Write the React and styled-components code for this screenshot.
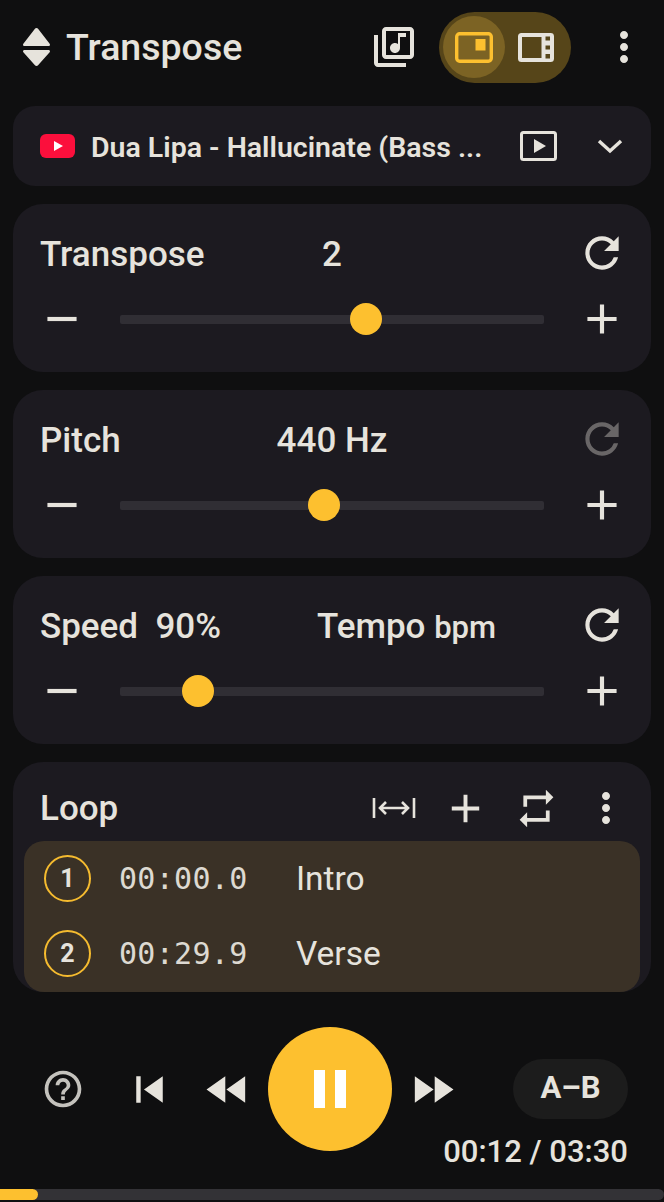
import React from 'react';
import styled, { createGlobalStyle } from 'styled-components';

const GlobalStyle = createGlobalStyle`
  html, body {
    margin: 0;
    padding: 0;
    background: #0f0f10;
  }
  * {
    box-sizing: border-box;
  }
`;

const Page = styled.div`
  width: 664px;
  height: 1202px;
  overflow: hidden;
  display: flex;
  flex-direction: column;
  background: #0f0f10;
  color: #e6e3dc;
  font-family: Roboto, "Liberation Sans", sans-serif;
`;

const Header = styled.header`
  height: 94px;
  flex: none;
  display: flex;
  align-items: center;
  padding: 0 16px 0 22px;
  margin-bottom: 12px;
`;

const AppTitle = styled.h1`
  margin: 0 0 0 15px;
  font-size: 37.5px;
  font-weight: 500;
  flex: 1;
`;

const LayoutToggle = styled.div`
  width: 132px;
  height: 71px;
  margin: 0 29px 0 21px;
  border-radius: 36px;
  background: #564519;
  display: flex;
  align-items: center;
  padding-left: 4px;
`;

const ToggleItem = styled.div`
  width: 62px;
  height: 62px;
  border-radius: 50%;
  display: flex;
  align-items: center;
  justify-content: center;
  background: ${(p) => (p.$active ? '#7c6324' : 'transparent')};
`;

const Main = styled.main`
  display: flex;
  flex-direction: column;
  gap: 18px;
  padding: 0 13px;
`;

const VideoCard = styled.section`
  height: 80px;
  border-radius: 22px;
  background: #1c1a20;
  display: flex;
  align-items: center;
  padding: 0 24px 0 27px;
`;

const VideoTitle = styled.div`
  width: 393px;
  margin: 2px 36px 0 16px;
  font-size: 28.5px;
  font-weight: 600;
  white-space: nowrap;
`;

const ChevronSlot = styled.div`
  margin-left: 40px;
  display: flex;
`;

const Card = styled.section`
  height: ${(p) => p.$height || 168}px;
  border-radius: 30px;
  background: #1c1a20;
`;

const ControlRow = styled.div`
  height: 68px;
  margin-top: 16px;
  padding: 0 27px;
  display: grid;
  grid-template-columns: ${(p) => p.$columns || '1fr auto 1fr'};
  align-items: center;
  font-size: 35px;
  font-weight: 500;
`;

const ValueText = styled.span`
  text-align: center;
`;

const Unit = styled.span`
  font-size: 31px;
`;

const ResetButton = styled.div`
  justify-self: end;
  display: flex;
  margin: -2px -3px 0 0;
  opacity: ${(p) => (p.$disabled ? 0.38 : 1)};
`;

const SliderRow = styled.div`
  display: flex;
  align-items: center;
  height: 50px;
  margin-top: 6px;
  padding: 0 24px;
  gap: 33px;
`;

const SliderTrack = styled.div`
  position: relative;
  flex: 1;
  height: 9px;
  background: #302e34;
  border-radius: 2px;
`;

const SliderThumb = styled.div`
  position: absolute;
  top: 50%;
  width: 32px;
  height: 32px;
  margin: -16px 0 0 -16px;
  border-radius: 50%;
  background: #fdc02f;
`;

const LoopHead = styled.div`
  height: 68px;
  margin-top: 12px;
  padding: 0 21px 0 27px;
  display: flex;
  align-items: center;
  justify-content: space-between;
  font-size: 35px;
  font-weight: 500;
`;

const LoopTools = styled.div`
  display: flex;
  align-items: center;
  gap: 21px;
`;

const ToolSlot = styled.div`
  width: ${(p) => p.$width || 50}px;
  margin-right: ${(p) => p.$after || 0}px;
  display: flex;
  align-items: center;
  justify-content: center;
`;

const LoopList = styled.div`
  height: 151px;
  margin: -1px 11px 0;
  border-radius: 20px;
  background: #3a3126;
`;

const LoopRow = styled.div`
  height: 75px;
  padding-left: 20px;
  display: flex;
  align-items: center;
`;

const Badge = styled.div`
  width: 47px;
  height: 47px;
  flex: none;
  border-radius: 50%;
  border: 2px solid #f5bb2f;
  display: flex;
  align-items: center;
  justify-content: center;
  font-size: 25px;
  font-weight: 700;
`;

const LoopTime = styled.span`
  width: 177px;
  margin-left: 28px;
  font-family: "DejaVu Sans Mono", "Liberation Mono", monospace;
  font-size: 30px;
  letter-spacing: 0.3px;
  opacity: 0.95;
`;

const LoopName = styled.span`
  font-size: 33.5px;
`;

const Player = styled.footer`
  margin-top: 35px;
  height: 162px;
  flex: none;
  display: flex;
  align-items: flex-start;
  padding-left: 38px;
`;

const Transport = styled.div`
  height: 124px;
  width: 50px;
  flex: none;
  display: flex;
  align-items: center;
  justify-content: center;
  margin-left: ${(p) => p.$gap || 0}px;
`;

const PauseButton = styled.div`
  width: 124px;
  height: 124px;
  margin-left: 16px;
  flex: none;
  border-radius: 50%;
  background: #fdc02f;
  display: flex;
  align-items: center;
  justify-content: center;
`;

const PlayerRight = styled.div`
  margin-left: 56px;
  width: 115px;
  padding-top: 32px;
  display: flex;
  flex-direction: column;
  align-items: flex-end;
`;

const AbButton = styled.div`
  width: 115px;
  height: 60px;
  padding-bottom: 4px;
  border-radius: 30px;
  background: #1c1c1c;
  display: flex;
  align-items: center;
  justify-content: center;
  font-size: 31px;
  font-weight: 700;
`;

const TimeText = styled.div`
  margin-top: 14px;
  font-size: 31px;
  font-weight: 500;
  white-space: nowrap;
`;

const Progress = styled.div`
  height: 11px;
  flex: none;
  border-radius: 0 6px 6px 0;
  background: #333236;
  overflow: hidden;
`;

const ProgressFill = styled.div`
  height: 100%;
  border-radius: 0 6px 6px 0;
  background: #fdc02f;
`;

const Icon = ({ d, size = 50, color = '#e6e3dc' }) => (
  <svg width={size} height={size} viewBox="0 0 24 24" fill={color} style={{ flex: 'none', display: 'block' }}>
    <path d={d} />
  </svg>
);

const paths = {
  refresh:
    'M17.65 6.35A7.958 7.958 0 0 0 12 4c-4.42 0-7.99 3.58-7.99 8s3.57 8 7.99 8c3.73 0 6.84-2.55 7.73-6h-2.08A5.99 5.99 0 0 1 12 18c-3.31 0-6-2.69-6-6s2.69-6 6-6c1.66 0 3.14.69 4.22 1.78L13 11h7V4l-2.35 2.35z',
  more: 'M12 8c1.1 0 2-.9 2-2s-.9-2-2-2-2 .9-2 2 .9 2 2 2zm0 2c-1.1 0-2 .9-2 2s.9 2 2 2 2-.9 2-2-.9-2-2-2zm0 6c-1.1 0-2 .9-2 2s.9 2 2 2 2-.9 2-2-.9-2-2-2z',
  library:
    'M20 2H8c-1.1 0-2 .9-2 2v12c0 1.1.9 2 2 2h12c1.1 0 2-.9 2-2V4c0-1.1-.9-2-2-2zm0 14H8V4h12v12zm-7.5-1c1.38 0 2.5-1.12 2.5-2.5V7h3V5h-4v5.51c-.42-.32-.93-.51-1.5-.51-1.38 0-2.5 1.12-2.5 2.5s1.12 2.5 2.5 2.5zM4 6H2v14c0 1.1.9 2 2 2h14v-2H4V6z',
  plus: 'M19 13h-6v6h-2v-6H5v-2h6V5h2v6h6v2z',
  minus: 'M19 13H5v-2h14v2z',
  repeat: 'M7 7h10v3l4-4-4-4v3H5v6h2V7zm10 10H7v-3l-4 4 4 4v-3h12v-6h-2v4z',
  help: 'M11 18h2v-2h-2v2zm1-16C6.48 2 2 6.48 2 12s4.48 10 10 10 10-4.48 10-10S17.52 2 12 2zm0 18c-4.41 0-8-3.59-8-8s3.59-8 8-8 8 3.59 8 8-3.59 8-8 8zm0-14c-2.21 0-4 1.79-4 4h2c0-1.1.9-2 2-2s2 .9 2 2c0 2-3 1.75-3 5h2c0-2.25 3-2.5 3-5 0-2.21-1.79-4-4-4z',
  skipPrev: 'M6 6h2v12H6zm3.5 6l8.5 6V6z',
  rewind: 'M11 18V6l-8.5 6 8.5 6zm.5-6l8.5 6V6l-8.5 6z',
  forward: 'M4 18l8.5-6L4 6v12zm9-12v12l8.5-6L13 6z',
};

const TransposeLogo = () => (
  <svg width="29" height="40" viewBox="0 0 30 40" fill="#e6e3dc" style={{ flex: 'none' }}>
    <path d="M13.4 1.2a2 2 0 0 1 3.2 0L28.6 16.6c.8 1.1.1 2.4-1.2 2.4H2.6c-1.3 0-2-1.3-1.2-2.4z" />
    <path d="M13.4 38.8a2 2 0 0 0 3.2 0L28.6 25.4c.8-1.1.1-2.4-1.2-2.4H2.6c-1.3 0-2 1.3-1.2 2.4z" />
  </svg>
);

const PipIcon = ({ color }) => (
  <svg width="38" height="31" viewBox="0 0 38 31" fill="none" style={{ flex: 'none' }}>
    <rect x="1.7" y="1.7" width="34.6" height="27.6" rx="3" stroke={color} strokeWidth="3.4" />
    <rect x="20.5" y="7" width="10" height="11.5" fill={color} />
  </svg>
);

const SideIcon = ({ color }) => (
  <svg width="36" height="29" viewBox="0 0 36 29" style={{ flex: 'none' }}>
    <path
      fill={color}
      fillRule="evenodd"
      d="M3.5 0h29A3.5 3.5 0 0 1 36 3.5v22a3.5 3.5 0 0 1-3.5 3.5h-29A3.5 3.5 0 0 1 0 25.5v-22A3.5 3.5 0 0 1 3.5 0zM4 4v21h19.5V4zM27.5 3.5v4H32v-4zM27.5 12.5v4H32v-4zM27.5 21v4.5H32V21z"
    />
  </svg>
);

const YoutubeLogo = () => (
  <svg width="35" height="24" viewBox="0 0 35 24" style={{ flex: 'none' }}>
    <rect width="35" height="24" rx="6" fill="#fb0f3c" />
    <path d="M14 7l9 5-9 5z" fill="#fff" />
  </svg>
);

const PlayBoxIcon = () => (
  <svg width="37" height="30" viewBox="0 0 37 30" fill="none" style={{ flex: 'none' }}>
    <rect x="1.5" y="1.5" width="34" height="27" rx="2" stroke="#e6e3dc" strokeWidth="3" />
    <path d="M14 8v14l12-7z" fill="#e6e3dc" />
  </svg>
);

const ChevronIcon = () => (
  <svg width="26" height="16" viewBox="0 0 26 16" fill="none" style={{ flex: 'none' }}>
    <path d="M2 3l11 10L24 3" stroke="#e6e3dc" strokeWidth="3.4" />
  </svg>
);

const FitIcon = () => (
  <svg width="44" height="24" viewBox="0 0 44 24" fill="none" style={{ flex: 'none' }}>
    <path
      d="M2 2v20M42 2v20M8 12h28M14 6l-6 6 6 6M30 6l6 6-6 6"
      stroke="#e6e3dc"
      strokeWidth="2.6"
    />
  </svg>
);

const PauseIcon = () => (
  <svg width="32" height="38" viewBox="0 0 32 38" fill="#fff" style={{ flex: 'none' }}>
    <rect width="11" height="38" />
    <rect x="21" width="11" height="38" />
  </svg>
);

const Slider = ({ position }) => (
  <SliderRow>
    <Icon d={paths.minus} />
    <SliderTrack>
      <SliderThumb style={{ left: `${position}%` }} />
    </SliderTrack>
    <Icon d={paths.plus} />
  </SliderRow>
);

const loops = [
  { id: 1, time: '00:00.0', name: 'Intro' },
  { id: 2, time: '00:29.9', name: 'Verse' },
];

export default function App() {
  return (
    <Page>
      <GlobalStyle />
      <Header>
        <TransposeLogo />
        <AppTitle>Transpose</AppTitle>
        <Icon d={paths.library} size={48} />
        <LayoutToggle>
          <ToggleItem $active>
            <PipIcon color="#fdc02f" />
          </ToggleItem>
          <ToggleItem>
            <SideIcon color="#e6e3dc" />
          </ToggleItem>
        </LayoutToggle>
        <Icon d={paths.more} size={48} />
      </Header>

      <Main>
        <VideoCard>
          <YoutubeLogo />
          <VideoTitle>Dua Lipa - Hallucinate (Bass ...</VideoTitle>
          <PlayBoxIcon />
          <ChevronSlot>
            <ChevronIcon />
          </ChevronSlot>
        </VideoCard>

        <Card>
          <ControlRow>
            <span>Transpose</span>
            <ValueText>2</ValueText>
            <ResetButton>
              <Icon d={paths.refresh} />
            </ResetButton>
          </ControlRow>
          <Slider position={58} />
        </Card>

        <Card>
          <ControlRow>
            <span>Pitch</span>
            <ValueText>440 Hz</ValueText>
            <ResetButton $disabled>
              <Icon d={paths.refresh} />
            </ResetButton>
          </ControlRow>
          <Slider position={48} />
        </Card>

        <Card>
          <ControlRow $columns="277px auto 1fr">
            <span>Speed&nbsp;&nbsp;90%</span>
            <span>
              Tempo <Unit>bpm</Unit>
            </span>
            <ResetButton>
              <Icon d={paths.refresh} />
            </ResetButton>
          </ControlRow>
          <Slider position={18.3} />
        </Card>

        <Card $height={230}>
          <LoopHead>
            <span>Loop</span>
            <LoopTools>
              <ToolSlot $width={44} $after={3}>
                <FitIcon />
              </ToolSlot>
              <ToolSlot>
                <Icon d={paths.plus} size={47} />
              </ToolSlot>
              <ToolSlot>
                <Icon d={paths.repeat} size={45} />
              </ToolSlot>
              <Icon d={paths.more} size={48} />
            </LoopTools>
          </LoopHead>
          <LoopList>
            {loops.map((loop) => (
              <LoopRow key={loop.id}>
                <Badge>{loop.id}</Badge>
                <LoopTime>{loop.time}</LoopTime>
                <LoopName>{loop.name}</LoopName>
              </LoopRow>
            ))}
          </LoopList>
        </Card>
      </Main>

      <Player>
        <Transport>
          <Icon d={paths.help} size={44} color="#c4c2bd" />
        </Transport>
        <Transport $gap={36}>
          <Icon d={paths.skipPrev} size={53} />
        </Transport>
        <Transport $gap={28}>
          <Icon d={paths.rewind} size={53} />
        </Transport>
        <PauseButton>
          <PauseIcon />
        </PauseButton>
        <Transport $gap={15}>
          <Icon d={paths.forward} size={53} />
        </Transport>
        <PlayerRight>
          <AbButton>A–B</AbButton>
          <TimeText>00:12 / 03:30</TimeText>
        </PlayerRight>
      </Player>

      <Progress>
        <ProgressFill style={{ width: `${(12 / 210) * 100}%` }} />
      </Progress>
    </Page>
  );
}
